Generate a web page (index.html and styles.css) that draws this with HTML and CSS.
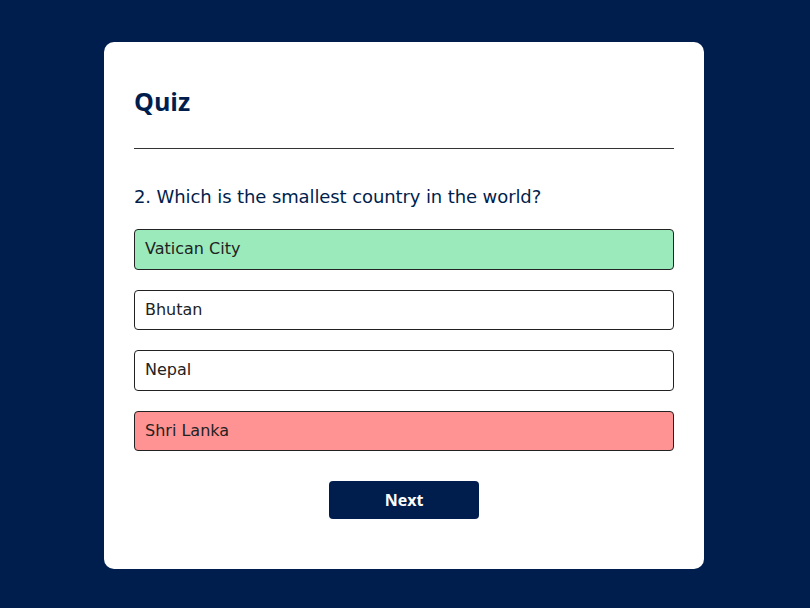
FILE: index.html
```html
<!DOCTYPE html>
<html lang="en">
<head>
<meta charset="utf-8">
<title>Quiz</title>
<link rel="stylesheet" href="styles.css">
</head>
<body>
<div class="app">
  <h1 class="title">Quiz</h1>
  <div class="quiz">
    <h2 class="question">2. Which is the smallest country in the world?</h2>
    <div class="answers">
      <button class="btn correct">Vatican City</button>
      <button class="btn">Bhutan</button>
      <button class="btn">Nepal</button>
      <button class="btn incorrect">Shri Lanka</button>
    </div>
    <button class="next-btn">Next</button>
  </div>
</div>
</body>
</html>
```
FILE: styles.css
```css
* {
  box-sizing: border-box;
  margin: 0;
  padding: 0;
}

body {
  background: #001e4d;
  font-family: "DejaVu Sans", "Open Sans", sans-serif;
  padding-right: 2px;
}

.app {
  background: #fff;
  width: 600px;
  margin: 42px auto 0;
  border-radius: 10px;
  padding: 40px 30px 50px;
}

.title {
  font-family: "Open Sans", sans-serif;
  font-size: 25px;
  line-height: 38px;
  color: #001e4d;
  font-weight: 700;
  border-bottom: 1px solid #333;
  padding-bottom: 28px;
}

.quiz {
  display: flex;
  flex-direction: column;
}

.question {
  margin-top: 33.5px;
  font-size: 18px;
  line-height: 27px;
  letter-spacing: -0.1px;
  color: #001e4d;
  font-weight: 400;
}

.answers {
  margin-top: 19.5px;
  display: flex;
  flex-direction: column;
  gap: 20px;
}

.btn {
  display: block;
  width: 100%;
  background: #fff;
  color: #222;
  font-family: inherit;
  font-size: 16px;
  font-weight: 400;
  line-height: 18.5px;
  text-align: left;
  padding: 10px;
  border: 1px solid #222;
  border-radius: 4px;
}

.btn.correct {
  background: #9aeabc;
}

.btn.incorrect {
  background: #ff9393;
}

.next-btn {
  align-self: center;
  width: 150px;
  height: 38px;
  margin-top: 30px;
  background: #001e4d;
  color: #fff;
  font-family: "Open Sans", sans-serif;
  font-size: 16px;
  font-weight: 700;
  border: 0;
  border-radius: 4px;
}
```
